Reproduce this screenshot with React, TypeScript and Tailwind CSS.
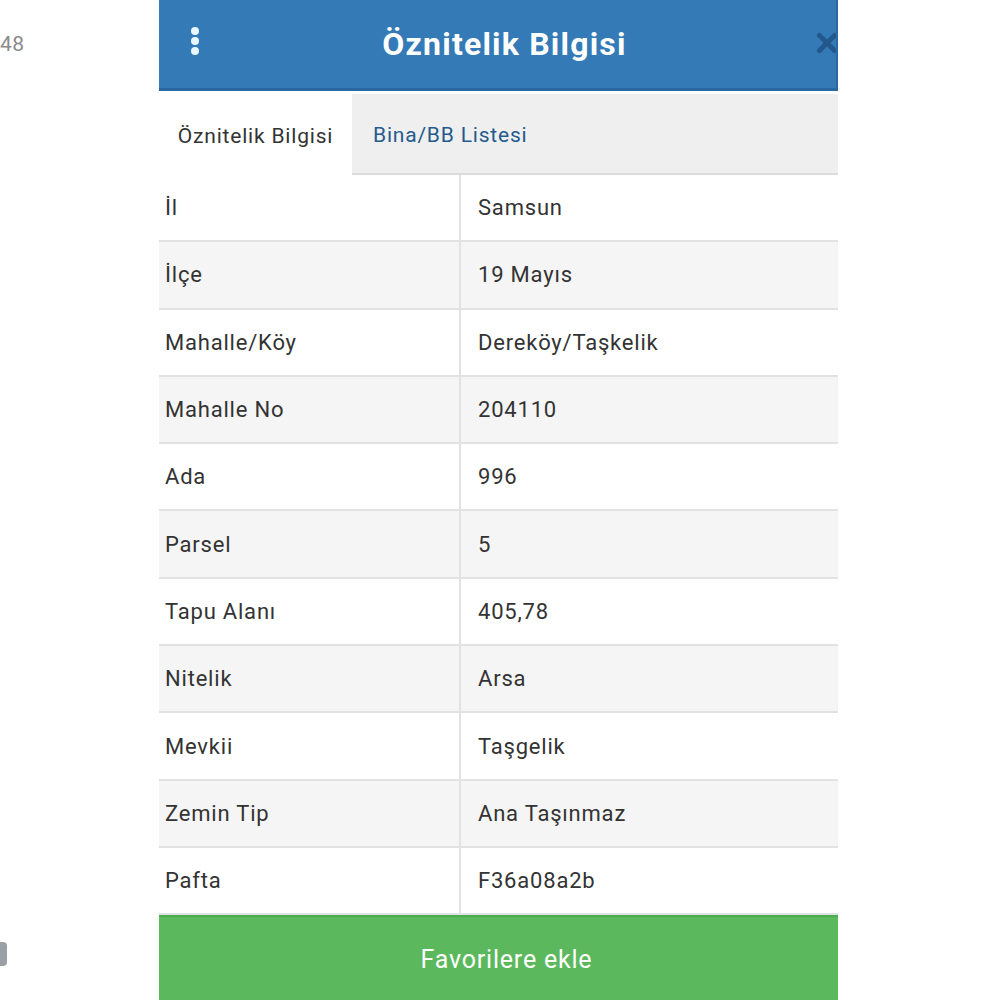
import { X } from 'lucide-react'

const rows = [
  { label: 'İl', value: 'Samsun' },
  { label: 'İlçe', value: '19 Mayıs' },
  { label: 'Mahalle/Köy', value: 'Dereköy/Taşkelik' },
  { label: 'Mahalle No', value: '204110' },
  { label: 'Ada', value: '996' },
  { label: 'Parsel', value: '5' },
  { label: 'Tapu Alanı', value: '405,78' },
  { label: 'Nitelik', value: 'Arsa' },
  { label: 'Mevkii', value: 'Taşgelik' },
  { label: 'Zemin Tip', value: 'Ana Taşınmaz' },
  { label: 'Pafta', value: 'F36a08a2b' },
]

export default function App() {
  return (
    <div className="flex h-[1000px] w-[1000px] overflow-hidden bg-white font-['Roboto',sans-serif]">
      {/* sol taraf (arka plan) */}
      <div className="relative w-[159px] shrink-0">
        <span className="absolute left-0 top-[29px] text-[21px] tracking-[0.5px] text-[#8a8a8a]">48</span>
        <span className="absolute left-0 top-[942px] h-[24px] w-[7px] rounded-r-sm bg-[#9aa0a6]" />
      </div>

      {/* panel */}
      <div className="flex w-[679px] shrink-0 flex-col">
        {/* başlık */}
        <div className="relative flex h-[91px] shrink-0 items-center justify-center overflow-hidden border-b-[3px] border-r-2 border-[#2a67a3] bg-[#337ab7]">
          <div className="absolute left-[32px] top-[27px] flex flex-col gap-[2px]">
            <span className="h-[8px] w-[8px] rounded-full bg-[#e8f6ff]" />
            <span className="h-[8px] w-[8px] rounded-full bg-[#e8f6ff]" />
            <span className="h-[8px] w-[8px] rounded-full bg-[#e8f6ff]" />
          </div>
          <h1 className="pl-[14px] text-[32px] font-bold tracking-[1.2px] text-white">Öznitelik Bilgisi</h1>
          <X className="absolute right-[-6px] top-[28px] h-[30px] w-[30px] text-[#23588c]" strokeWidth={4} />
        </div>

        {/* sekmeler */}
        <div className="mt-[3px] flex h-[81px] shrink-0 pt-[4px] text-[21px] tracking-[0.8px]">
          <div className="-mt-[4px] flex w-[193px] items-center justify-center bg-white pt-[4px] text-[#333]">
            Öznitelik Bilgisi
          </div>
          <div className="-mt-[4px] flex flex-1 items-center border-b-2 border-[#dcdcdc] bg-[#efefef] pl-[21px] pt-[4px] text-[#245a8d]">
            Bina/BB Listesi
          </div>
        </div>

        {/* tablo */}
        <div className="flex flex-col">
          {rows.map((row, i) => (
            <div
              key={row.label}
              className={`flex h-[67.3px] border-b-2 border-[#e2e2e2] text-[22px] tracking-[0.8px] text-[#333] ${
                i % 2 === 1 ? 'bg-[#f5f5f5]' : 'bg-white'
              } ${i === rows.length - 1 ? 'border-b-0' : ''}`}
            >
              <div className="flex w-[302px] items-center border-r-2 border-[#e2e2e2] pl-[6px]">{row.label}</div>
              <div className="flex flex-1 items-center pl-[17px]">{row.value}</div>
            </div>
          ))}
        </div>

        {/* favori butonu */}
        <button className="mt-auto flex h-[87px] shrink-0 items-center justify-center border-t-2 border-[#4cab4c] bg-[#5cb85c] pl-[16px] text-[25px] tracking-[0.8px] text-white">
          Favorilere ekle
        </button>
      </div>
    </div>
  )
}
